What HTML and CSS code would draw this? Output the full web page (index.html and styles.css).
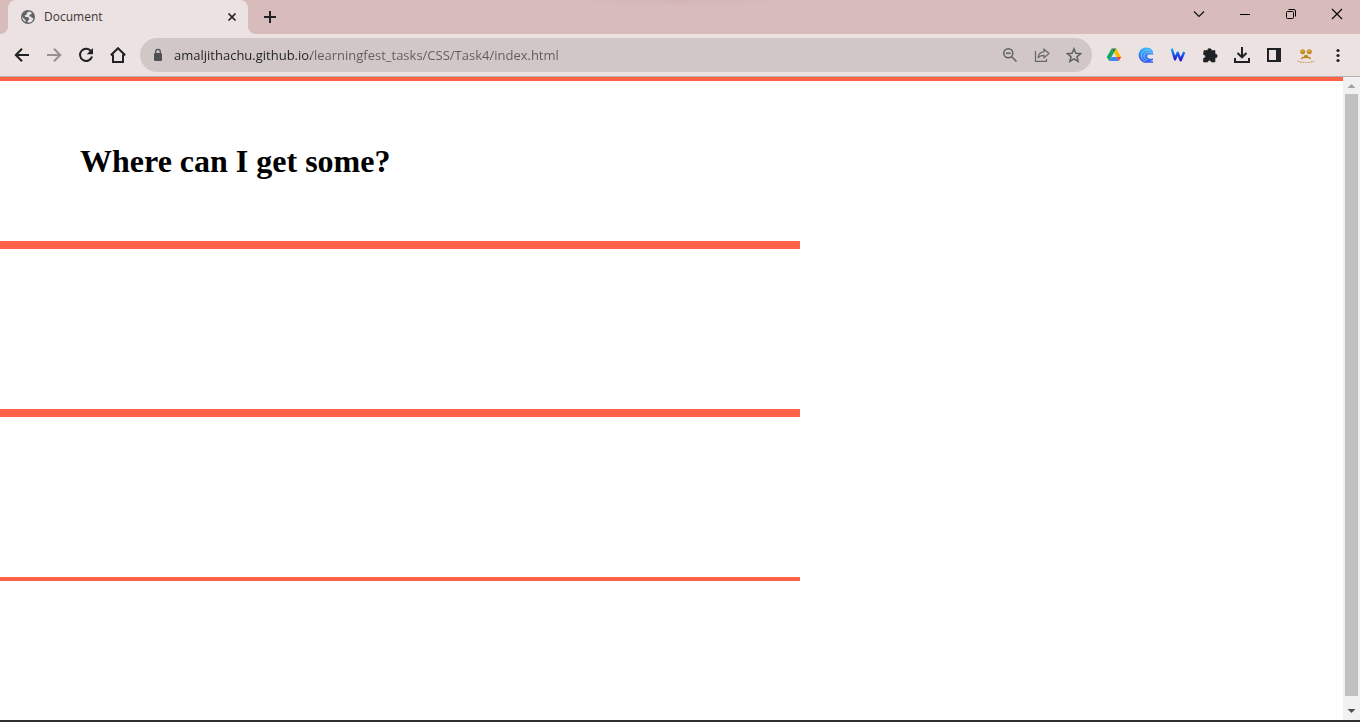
FILE: index.html
```html
<!DOCTYPE html>
<html lang="en">
<head>
<meta charset="utf-8">
<title>Document</title>
<link rel="stylesheet" href="styles.css">
</head>
<body>
<div class="browser">
  <header class="titlebar">
    <div class="tab">
      <svg class="icon" viewBox="0 0 16 16" aria-hidden="true"><circle cx="8" cy="8" r="7" fill="#5f6368"/><path d="M9 2.400 6.800 3.800v1.600L4.600 6.600l.9 1.300h2.300l1.300 1.300v1.500l-1.500 1v1.900a5.700 5.700 0 0 0 5.900-4.200l-1.400-.4-1.300-1.500H9.400V6.100l1.700-.8.8-1.300A5.600 5.600 0 0 0 9 2.400zM2.300 7.400a5.700 5.700 0 0 0 3.200 5.600v-1.900L3.900 9.700z" fill="#ece2e1"/></svg>
      <span class="tab-title">Document</span>
      <button class="plain" aria-label="Close tab"><svg class="icon" viewBox="0 0 16 16"><path d="m4.500 4.500 7 7m0-7-7 7" stroke="#202124" stroke-width="1.700"/></svg></button>
    </div>
    <button class="plain new-tab" aria-label="New tab"><svg class="icon" viewBox="0 0 16 16"><path d="M8 2v12M2 8h12" stroke="#202124" stroke-width="2"/></svg></button>
    <div class="window-controls">
      <button class="plain" aria-label="Search tabs"><svg class="icon" viewBox="0 0 16 16"><path d="m3 5.500 5 5 5-5" fill="none" stroke="#111" stroke-width="1.200"/></svg></button>
      <button class="plain" aria-label="Minimize"><svg class="icon" viewBox="0 0 16 16"><path d="M3 8.500h10" stroke="#000"/></svg></button>
      <button class="plain" aria-label="Restore"><svg class="icon" viewBox="0 0 16 16"><g fill="none" stroke="#000"><rect x="3.500" y="5.500" width="7" height="7" rx="1"/><path d="M5.500 3.500H11A1.500 1.500 0 0 1 12.500 5v5.500"/></g></svg></button>
      <button class="plain" aria-label="Close"><svg class="icon" viewBox="0 0 16 16"><path d="m3 3 10 10m0-10L3 13" stroke="#000" stroke-width="1.100"/></svg></button>
    </div>
  </header>

  <nav class="toolbar" aria-label="Browser toolbar">
    <div class="tools">
      <button class="plain" aria-label="Back"><svg class="icon" viewBox="0 0 16 16"><path d="M15 8H2m6-6.200L1.800 8 8 14.200" fill="none" stroke="#202124" stroke-width="2"/></svg></button>
      <button class="plain" aria-label="Forward" disabled><svg class="icon" viewBox="0 0 16 16"><path d="M1 8h13M8 1.800 14.200 8 8 14.200" fill="none" stroke="#979092" stroke-width="2"/></svg></button>
      <button class="plain" aria-label="Reload"><svg class="icon" viewBox="0 0 16 16"><path d="M13.300 4.600A6.100 6.100 0 1 0 14 9.500" fill="none" stroke="#202124" stroke-width="2"/><path d="M15 1v6.300H8.700z" fill="#202124"/></svg></button>
      <button class="plain" aria-label="Home"><svg class="icon" viewBox="0 0 16 16"><path d="M.8 8.300 8 1.200l7.200 7.100M3 7.500V15h10V7.500" fill="none" stroke="#202124" stroke-width="2"/></svg></button>
    </div>
    <div class="omnibox">
      <svg class="icon lock" viewBox="0 0 16 16" aria-hidden="true"><rect x="4" y="6" width="8" height="8" rx="1" fill="#4d5156"/><path d="M5.700 6.500V4.700a2.300 2.300 0 0 1 4.600 0v1.800" fill="none" stroke="#4d5156" stroke-width="1.300"/></svg>
      <input class="address" type="text" aria-label="Address" value="amaljithachu.github.io/learningfest_tasks/CSS/Task4/index.html">
      <button class="plain" aria-label="Zoom"><svg class="icon" viewBox="0 0 16 16"><g fill="none" stroke="#5f6063" stroke-width="1.500"><circle cx="6.300" cy="6.300" r="4.500"/><path d="m9.700 9.700 4.800 4.800M4 6.300h4.600"/></g></svg></button>
      <button class="plain" aria-label="Share"><svg class="icon" viewBox="0 0 16 16"><g fill="none" stroke="#68686b" stroke-width="1.200"><path d="M1.500 4v10.400h11V12"/><path d="M10 2.200 15 6.500l-5 4.300V8.300c-2.800 0-4.600.7-6 2.700.4-3.600 2.600-6 6-6.400z"/></g></svg></button>
      <button class="plain" aria-label="Bookmark"><svg class="icon" viewBox="0 0 16 16"><path d="m8 1.800 1.900 4.400 4.700.4-3.600 3.100 1.100 4.700L8 11.900l-4.100 2.500L5 9.700 1.400 6.600l4.700-.4z" fill="none" stroke="#5f6063" stroke-width="1.500"/></svg></button>
    </div>
    <div class="tools">
      <button class="plain" aria-label="Drive"><svg class="icon" viewBox="0 0 16 16"><path d="M5.700 1.500 8 5.500 3.200 14 .8 10z" fill="#16a765"/><path d="M5.700 1.500h4.600L8 5.500z" fill="#188038"/><path d="M10.300 1.500 15.200 10h-4.600L8 5.500z" fill="#fbbc04"/><path d="M5.500 10h5.100l2.200 4H3.200z" fill="#4285f4"/><path d="M10.600 10h4.600l-2.400 4z" fill="#ea4335"/></svg></button>
      <button class="plain" aria-label="Wave"><svg class="icon" viewBox="0 0 16 16"><defs><linearGradient id="wave" x2="0" y2="1"><stop stop-color="#38baf5"/><stop offset="1" stop-color="#3056f5"/></linearGradient></defs><path d="M14.500 3.600A7.700 7.700 0 1 0 8.500 15.800H15v-1.600h-3L15 13v-1.500c-4 .8-5.800-.4-5.800-2.300C9.200 7.400 11.500 7 15.300 7.800z" fill="url(#wave)"/><path d="M13.500 3.800C8.500 1.300 3.300 4.500 3.500 9c.1 2.600 1.800 4.500 4 5.200M14.500 6C10.200 4 6 5.900 6 9c0 2 1.500 3.700 4 4" fill="none" stroke="#b8d9f8" stroke-width=".6"/></svg></button>
      <button class="plain" aria-label="Writer"><svg class="icon" viewBox="0 0 16 16"><defs><linearGradient id="writer" x2="0" y2="1"><stop stop-color="#19b5ee"/><stop offset=".55" stop-color="#164de5"/><stop offset="1" stop-color="#3516d8"/></linearGradient></defs><path d="M1.700 1.700 5 12.300l2.700-6.600 3 7.500L14.200 5" fill="none" stroke="url(#writer)" stroke-width="2.400" stroke-linejoin="round"/></svg></button>
      <button class="plain" aria-label="Extensions"><svg class="icon" viewBox="0 0 16 16"><path d="M2 3.500h3.500a2 2 0 1 1 4 0H13v3.500h.3a1.900 1.900 0 0 1 0 3.800H13V15H9.300a1.800 1.800 0 0 0-3.600 0H1.500v-3.700a1.900 1.900 0 0 0 0-3.800z" fill="#202124" stroke="#202124" stroke-width=".6" stroke-linejoin="round"/></svg></button>
      <button class="plain" aria-label="Downloads"><svg class="icon" viewBox="0 0 16 16"><path d="M8 0v10M3.500 6 8 10.300 12.500 6M1 11v4h14v-4" fill="none" stroke="#202124" stroke-width="2"/></svg></button>
      <button class="plain" aria-label="Side panel"><svg class="icon" viewBox="0 0 16 16"><path d="M1 1h14v14H1zM3 3v10h7V3z" fill="#202124" fill-rule="evenodd"/></svg></button>
      <button class="plain" aria-label="Profile"><svg class="icon wide" viewBox="0 0 18 16"><g fill="#c08b18"><circle cx="5.700" cy="4.800" r="2.500"/><circle cx="12.300" cy="4.800" r="2.500"/></g><path d="M4.500 4h2M11 4h2" stroke="#e8c46c"/><path d="M4.500 12c.5-2.500 8.500-2.500 9 0M7 9.500l2-1 2 1" fill="none" stroke="#bc861a" stroke-width="1.500"/><path d="M.5 13.800c4 2.600 13 2.600 17 0" fill="none" stroke="#d5a77b" stroke-width="1.300" stroke-dasharray="2 .7"/></svg></button>
      <button class="plain" aria-label="Menu"><svg class="icon" viewBox="0 0 16 16"><g fill="#202124"><circle cx="8" cy="3.500" r="1.600"/><circle cx="8" cy="8.500" r="1.600"/><circle cx="8" cy="13.500" r="1.600"/></g></svg></button>
    </div>
  </nav>

  <div class="viewport">
    <main class="page">
      <section class="intro"><h1>Where can I get some?</h1></section>
      <section class="panel"></section>
      <section class="panel"></section>
    </main>
    <div class="scrollbar" aria-hidden="true">
      <svg class="arrow" viewBox="0 0 17 17"><path d="m4.500 11 4-4 4 4z" fill="#a3a3a3"/></svg>
      <div class="thumb"></div>
      <svg class="arrow" viewBox="0 0 17 17"><path d="m4.500 6 4 4 4-4z" fill="#505050"/></svg>
    </div>
  </div>
</div>
</body>
</html>
```
FILE: styles.css
```css
* { box-sizing: border-box; }

body {
  margin: 0;
  background: #fff;
  font-family: "Liberation Serif", "Times New Roman", serif;
}

.browser {
  display: flex;
  flex-direction: column;
  min-height: 100vh;
  border-bottom: 2px solid #303030;
}

.icon { display: block; width: 16px; height: 16px; }
.icon.wide { width: 18px; }

.plain {
  display: flex;
  align-items: center;
  justify-content: center;
  width: 32px;
  height: 32px;
  padding: 0;
  border: 0;
  background: none;
}

.titlebar {
  display: flex;
  height: 34px;
  padding-left: 8px;
  background:
    radial-gradient(ellipse 120px 8px at 50% 0, #d3b5b6, transparent),
    #d8bcbc;
}

.tab {
  position: relative;
  display: flex;
  align-items: center;
  width: 240px;
  padding-left: 12px;
  border-radius: 8px 8px 0 0;
  background: #ece2e1;
}

.tab::before,
.tab::after {
  content: "";
  position: absolute;
  bottom: 0;
  width: 8px;
  height: 8px;
}

.tab::before {
  right: 100%;
  background: radial-gradient(circle at 0 0, transparent 8px, #ece2e1 8px);
}

.tab::after {
  left: 100%;
  background: radial-gradient(circle at 100% 0, transparent 8px, #ece2e1 8px);
}

.tab-title {
  flex: 1;
  margin-left: 8px;
  color: #3c3638;
  font: 12px/16px "Open Sans", "Segoe UI", sans-serif;
}

.new-tab { margin: 1px 0 0 6px; }

.window-controls {
  display: flex;
  margin-left: auto;
}

.window-controls .plain { width: 46px; height: 28px; }

.toolbar {
  display: flex;
  align-items: center;
  height: 43px;
  padding: 0 6px;
  border-bottom: 1px solid #b7b0b1;
  background: #ece2e1;
}

.tools { display: flex; }

.omnibox {
  display: flex;
  flex: 1;
  align-items: center;
  height: 34px;
  margin: 0 6px;
  padding: 0 2px 0 10px;
  border-radius: 17px;
  background: #d0c7c6;
}

.address {
  flex: 1;
  min-width: 0;
  height: 24px;
  margin-left: 8px;
  padding: 0;
  border: 0;
  outline: 0;
  color: #202124;
  font: 13px/24px "Open Sans", "Segoe UI", sans-serif;
  background: linear-gradient(to right, #202124 137px, #5f5b5e 137px);
  -webkit-background-clip: text;
  background-clip: text;
  -webkit-text-fill-color: transparent;
}

.viewport {
  display: flex;
  flex: 1;
}

.page {
  flex: 1;
  border-top: 4px solid tomato;
}

.intro,
.panel {
  width: 800px;
  max-width: 100%;
  border-bottom: 8px solid tomato;
}

.intro { padding: 62px 80px; }
.panel { height: 168px; }
.panel:last-child { height: 164px; border-bottom-width: 4px; }

h1 {
  margin: 0;
  font-size: 32px;
  line-height: 36px;
}

.scrollbar {
  display: flex;
  flex-direction: column;
  width: 17px;
  background: #f1f1f1;
}

.arrow { display: block; width: 17px; height: 17px; }

.thumb {
  flex: 1;
  margin: 0 2px 7px;
  background: #c1c1c1;
}
```
